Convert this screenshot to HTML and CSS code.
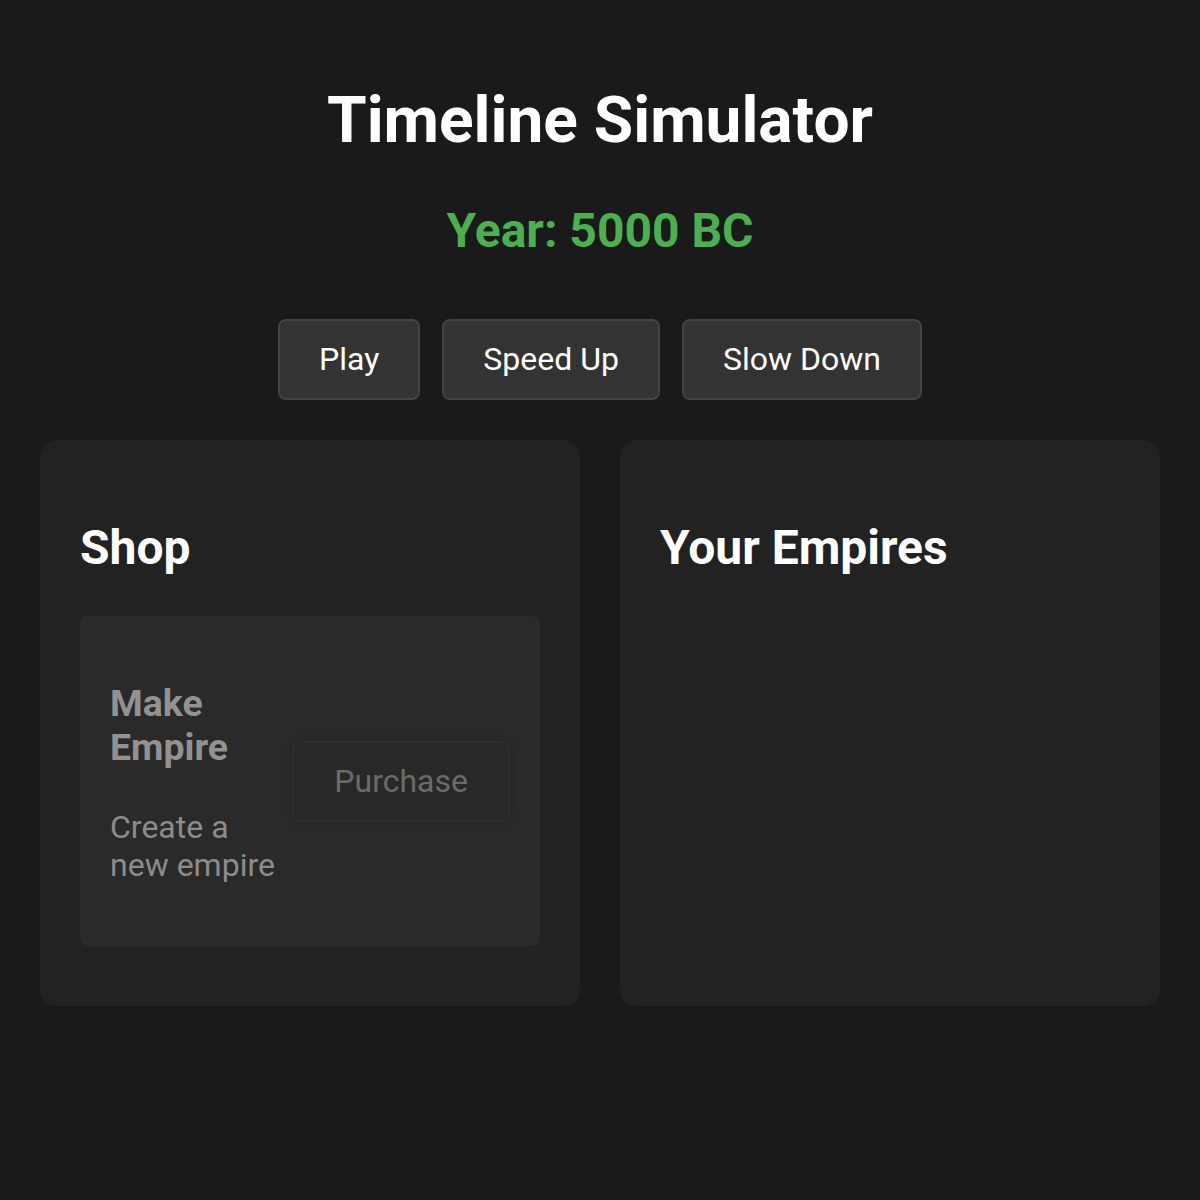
FILE: index.html
```html
<!DOCTYPE html>
<html>
<head>
<meta charset="utf-8">
<link rel="stylesheet" href="styles.css">
</head>
<body>
<div class="app">
  <h1 class="title">Timeline Simulator</h1>
  <div class="year">Year: 5000 BC</div>
  <div class="controls">
    <button class="ctrl">Play</button>
    <button class="ctrl">Speed Up</button>
    <button class="ctrl">Slow Down</button>
  </div>
  <div class="panels">
    <section class="panel">
      <h2 class="panel-title">Shop</h2>
      <div class="shop-item">
        <div class="item-info">
          <h3 class="item-name">Make Empire</h3>
          <p class="item-desc">Create a new empire</p>
        </div>
        <button class="buy" disabled>Purchase</button>
      </div>
    </section>
    <section class="panel">
      <h2 class="panel-title">Your Empires</h2>
    </section>
  </div>
</div>
</body>
</html>
```

FILE: styles.css
```css
html, body {
  margin: 0;
  padding: 0;
  background: #1a1a1a;
  color: #ffffff;
  font-family: Roboto, "Liberation Sans", sans-serif;
}

.app {
  padding: 40px;
  text-align: center;
}

.title {
  font-size: 64px;
  font-weight: 700;
  margin: 43px 0 0;
  line-height: 75px;
}

.year {
  font-size: 48px;
  font-weight: 700;
  color: #4caf50;
  line-height: 56px;
  margin-top: 45px;
}

.controls {
  display: flex;
  justify-content: center;
  gap: 22px;
  margin-top: 60px;
}

.ctrl {
  font-family: Roboto, "Liberation Sans", sans-serif;
  font-size: 32px;
  color: #ffffff;
  background: #333333;
  border: 2px solid #444444;
  border-radius: 8px;
  padding: 20px 39px;
  line-height: 37px;
  cursor: pointer;
}

.panels {
  display: grid;
  grid-template-columns: 1fr 1fr;
  gap: 40px;
  margin-top: 40px;
  text-align: left;
}

.panel {
  background: #222222;
  border-radius: 16px;
  padding: 40px;
}

.panel-title {
  font-size: 48px;
  font-weight: 700;
  line-height: 56px;
  margin: 40px 0;
}

.shop-item {
  display: flex;
  justify-content: space-between;
  align-items: center;
  background: #2a2a2a;
  border-radius: 8px;
  padding: 30px;
  margin-bottom: 20px;
}

.item-info {
  color: #8f8f8f;
}

.item-name {
  font-size: 37.44px;
  font-weight: 700;
  line-height: 44px;
  margin: 35px 0 40px;
  color: #929292;
}

.item-desc {
  font-size: 32px;
  line-height: 37.5px;
  margin: 32px 0;
  color: #8c8c8c;
}

.buy {
  font-family: Roboto, "Liberation Sans", sans-serif;
  font-size: 32px;
  line-height: 37px;
  color: #6a6a6a;
  background: #282828;
  border: 2px solid #2d2d2d;
  border-radius: 8px;
  padding: 20px 40px;
  box-shadow: 0 0 6px rgba(0, 0, 0, 0.15);
}
```
